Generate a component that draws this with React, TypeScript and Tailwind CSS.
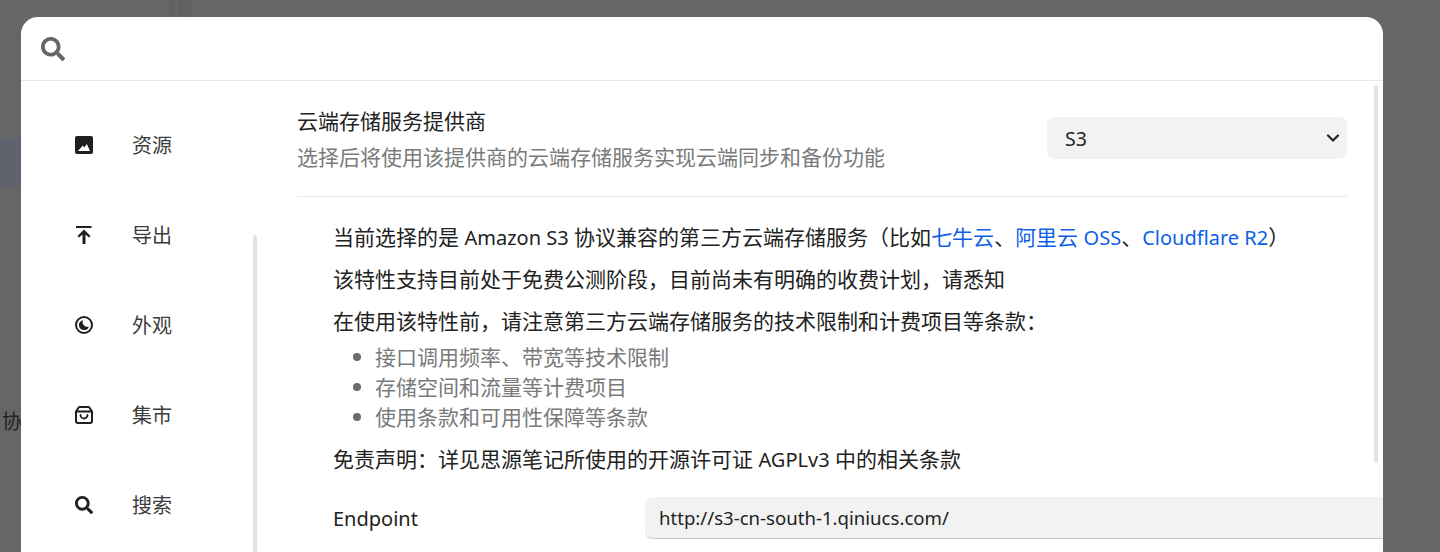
import { ChevronDown } from "lucide-react";
import { FaSearch } from "react-icons/fa";

const font = "font-['Noto_Sans','Noto_Sans_CJK_SC',sans-serif]";

function ImageIcon() {
  return (
    <svg viewBox="0 0 18 18" className="w-[18px] h-[18px]">
      <path
        fill="#1f1f1f"
        fillRule="evenodd"
        d="M2 0h14a2 2 0 0 1 2 2v14a2 2 0 0 1-2 2H2a2 2 0 0 1-2-2V2a2 2 0 0 1 2-2zM3 15h12l-3.2-7-2.4 3.600-1.600-2L3 15z"
      />
    </svg>
  );
}

function ExportIcon() {
  return (
    <svg viewBox="0 0 18 18" className="w-[18px] h-[18px]">
      <path fill="#1f1f1f" d="M1 0h15.500v2H1zM9 3.500l6.500 6.500-1.500 1.500-3.500-3V18h-3V8.500l-3.500 3L2.500 10z" />
    </svg>
  );
}

function MoonIcon() {
  return (
    <svg viewBox="0 0 18 18" className="w-[18px] h-[18px]">
      <circle cx="9" cy="9" r="8" fill="none" stroke="#1f1f1f" strokeWidth="2" />
      <path fill="#1f1f1f" d="M8 4.200a5 5 0 1 0 5.800 6.200 4.600 4.600 0 0 1-5.800-6.200z" />
    </svg>
  );
}

function BagIcon() {
  return (
    <svg viewBox="0 0 18 18" className="w-[18px] h-[18px]">
      <path
        fill="none"
        stroke="#1f1f1f"
        strokeWidth="2"
        strokeLinejoin="round"
        d="M4 1h10l3 4.500V15a2 2 0 0 1-2 2H3a2 2 0 0 1-2-2V5.500zM1 5.500h16"
      />
      <path fill="none" stroke="#1f1f1f" strokeWidth="1.800" strokeLinecap="round" d="M5.500 9a3.500 3.500 0 0 0 7 0" />
    </svg>
  );
}

const navItems = [
  { label: "资源", icon: <ImageIcon /> },
  { label: "导出", icon: <ExportIcon /> },
  { label: "外观", icon: <MoonIcon /> },
  { label: "集市", icon: <BagIcon /> },
  { label: "搜索", icon: <FaSearch className="w-[18px] h-[18px] text-[#1f1f1f]" /> },
];

const terms = ["接口调用频率、带宽等技术限制", "存储空间和流量等计费项目", "使用条款和可用性保障等条款"];

export default function App() {
  return (
    <div className={`relative h-[552px] overflow-hidden bg-[#666666] text-[21px] ${font}`}>
      {/* page behind the dialog */}
      <div className="absolute left-0 top-[138px] h-[48px] w-[21px] bg-[#5f636e]" />
      <div className="absolute left-[169px] top-0 h-[17px] w-[5px] bg-[#616161]" />
      <div className="absolute left-[178px] top-0 h-[17px] w-[14px] bg-[#616161]" />
      <div className="absolute left-[2px] top-[408px] text-[20px] leading-[28px] text-[#222222]">协</div>

      <div className="relative mx-[57px] ml-[21px] mt-[17px] h-[535px] overflow-hidden rounded-t-[17px] bg-white">
        <div className="flex h-[64px] items-center border-b border-[#e8e8e8] pl-[20px]">
          <FaSearch className="h-[24px] w-[24px] text-[#666666]" />
        </div>

        <div className="flex h-[471px]">
          <nav className="relative w-[236px] shrink-0">
            <ul className="flex flex-col pt-[19px]">
              {navItems.map((item) => (
                <li key={item.label} className="flex h-[90px] items-center pl-[54px] text-[#3c3c3c]">
                  <span className="w-[57px]">{item.icon}</span>
                  <span className="pt-[2px] text-[20px] leading-[28px]">{item.label}</span>
                </li>
              ))}
            </ul>
            <div className="absolute right-[0px] top-[154px] bottom-0 w-[4px] rounded-t-sm bg-[#e3e3e3]" />
          </nav>

          <main className="relative flex-1 pl-[40px] pr-[36px]">
            <div className="flex items-center justify-between border-b border-[#e8e8e8] pt-[22px] pb-[21px]">
              <div>
                <div className="leading-[36px] text-[#222222]">云端存储服务提供商</div>
                <div className="leading-[36px] text-[#7a7a7a]">选择后将使用该提供商的云端存储服务实现云端同步和备份功能</div>
              </div>
              <div className="relative mb-[2px]">
                <select
                  className="block h-[42px] w-[300px] appearance-none rounded-[8px] bg-[#f2f2f2] pl-[18px] pt-[2px] text-[19.500px] text-[#222222]"
                  defaultValue="S3"
                >
                  <option>S3</option>
                </select>
                <ChevronDown className="absolute right-[4px] top-[11px] h-[20px] w-[20px] text-[#222222]" strokeWidth={2.600} />
              </div>
            </div>

            <div className="pl-[36px] text-[#222222]">
              <p className="mt-[19px] leading-[42px] whitespace-nowrap">
                当前选择的是 <span className="text-[20px] leading-none">Amazon S3</span> 协议兼容的第三方云端存储服务（比如
                <a className="text-[#0d5fe8]">七牛云</a>、<a className="text-[#0d5fe8]">阿里云 <span className="text-[20px] leading-none">OSS</span></a>、<a className="text-[20px] leading-none text-[#0d5fe8]">Cloudflare R2</a>）
              </p>
              <p className="leading-[42px]">该特性支持目前处于免费公测阶段，目前尚未有明确的收费计划，请悉知</p>
              <p className="leading-[42px]">在使用该特性前，请注意第三方云端存储服务的技术限制和计费项目等条款：</p>
              <ul className="text-[#7a7a7a]">
                {terms.map((term) => (
                  <li key={term} className="flex items-center gap-[14px] pl-[20px] leading-[30px]">
                    <span className="h-[8px] w-[8px] rounded-full bg-[#6b6b6b]" />
                    {term}
                  </li>
                ))}
              </ul>
              <p className="mt-[6px] leading-[42px]">
                免责声明：详见思源笔记所使用的开源许可证 <span className="text-[20px] leading-none">AGPLv3</span> 中的相关条款
              </p>
              <div className="mt-[17px] flex items-center">
                <label className="w-[312px] shrink-0 pt-[2px] text-[20px]">Endpoint</label>
                <input
                  readOnly
                  value="http://s3-cn-south-1.qiniucs.com/"
                  className="-mr-[60px] h-[42px] flex-1 rounded-[8px] border-b border-[#c4c4cc] bg-[#f2f2f2] pl-[14px] text-[18.600px] text-[#222222] outline-none"
                />
              </div>
            </div>

            <div className="absolute right-[5px] top-[4px] h-[378px] w-[4px] rounded-sm bg-[#e3e3e3]" />
          </main>
        </div>
      </div>
    </div>
  );
}
